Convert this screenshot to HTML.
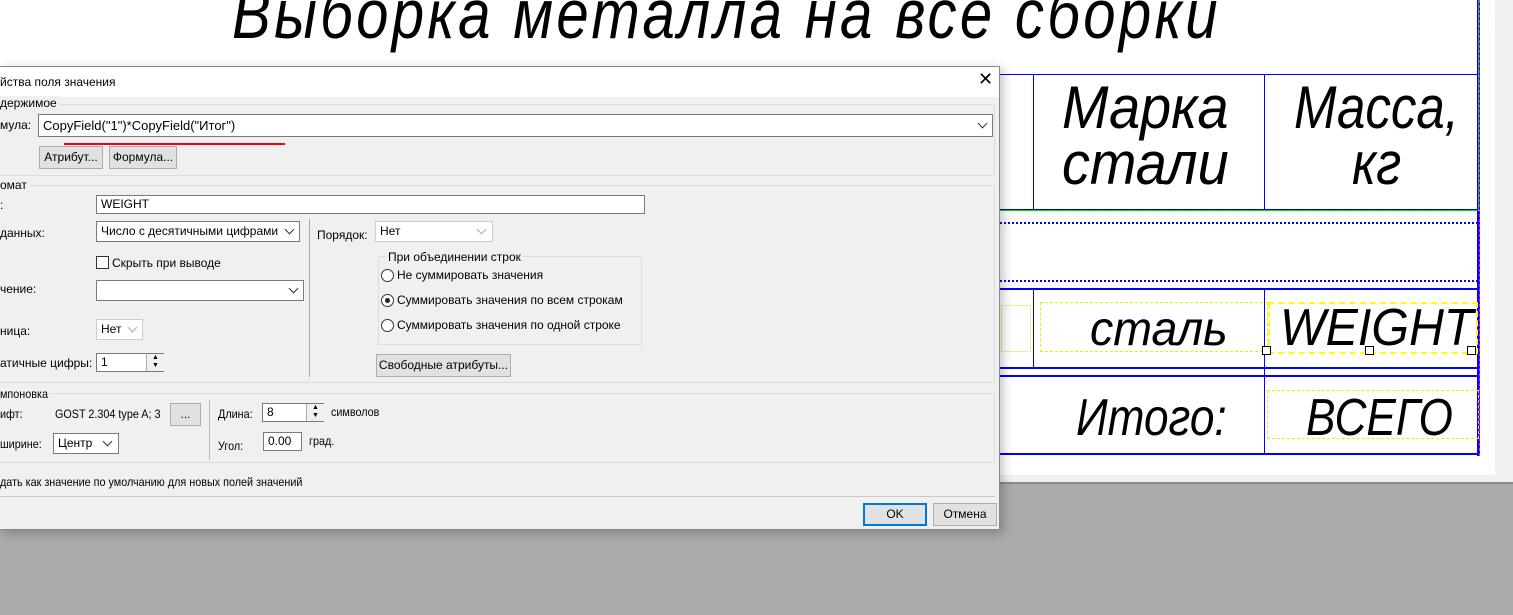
<!DOCTYPE html>
<html><head><meta charset="utf-8"><style>
body{margin:0;width:1513px;height:615px;overflow:hidden;background:#ababab;position:relative;font-family:"Segoe UI","Liberation Sans","DejaVu Sans",sans-serif;font-size:12px;color:#000}
.a{position:absolute}
.cad{font-family:"Liberation Sans",sans-serif;font-style:italic;font-weight:normal;color:#000;white-space:nowrap;transform:scaleX(0.85);transform-origin:left top}
.bl{background:#0000ff}
.in{background:#fff;border:1px solid #7a7a7a;box-sizing:border-box;padding:2px 4px;font-size:12px}
.btn{background:#e1e1e1;border:1px solid #adadad;box-sizing:border-box;text-align:center;font-size:12px}
.grp{border:1px solid #dcdcdc;box-sizing:border-box}
.t{position:absolute;white-space:nowrap;font-size:12px}
.cv{position:absolute;width:6px;height:6px;border-right:1px solid #333;border-bottom:1px solid #333;transform:rotate(45deg)}
.rad{position:absolute;width:11px;height:11px;border:1px solid #333;border-radius:50%;background:#fff}
</style></head><body>
<div class="a" style="left:0;top:0;width:1495px;height:475px;background:#fff"></div>
<div class="a" style="left:1495px;top:0;width:18px;height:482px;background:#f0f0f0"></div>
<div class="a" style="left:0;top:475px;width:1513px;height:7px;background:#f0f0f0"></div>
<div class="a" style="left:0;top:482px;width:1513px;height:2px;background:#8a8a8a"></div>
<div class="a cad" style="left:232px;top:-26px;font-size:70px;letter-spacing:4px;transform:scaleX(0.83)">Выборка металла на все сборки</div>
<!-- table lines -->
<div class="a bl" style="left:995px;top:74px;width:483px;height:1px"></div>
<div class="a" style="left:1477px;top:0;width:2px;height:456px;background:#0000ff;border-right:1px dashed #f0f"></div>
<div class="a" style="left:1478px;top:0;width:1px;height:210px;background:#00cc00"></div>
<div class="a bl" style="left:1033px;top:74px;width:1px;height:135px"></div>
<div class="a bl" style="left:1264px;top:74px;width:1px;height:135px"></div>
<div class="a bl" style="left:995px;top:209px;width:483px;height:1px"></div>
<div class="a" style="left:995px;top:210px;width:484px;height:1px;background:#00dd00"></div>
<div class="a" style="left:995px;top:222px;width:483px;border-top:2px dotted #0000ff"></div>
<div class="a" style="left:995px;top:280px;width:483px;border-top:2px dotted #0000ff"></div>
<div class="a bl" style="left:995px;top:288px;width:484px;height:2px"></div>
<div class="a bl" style="left:995px;top:367px;width:484px;height:2px"></div>
<div class="a bl" style="left:995px;top:375px;width:484px;height:2px"></div>
<div class="a bl" style="left:995px;top:453px;width:484px;height:2px"></div>
<div class="a bl" style="left:1033px;top:290px;width:1px;height:77px"></div>
<div class="a bl" style="left:1264px;top:290px;width:1px;height:163px"></div>
<div class="a" style="left:1040px;top:302px;width:226px;height:48px;border:1px dashed #ee0"></div>
<div class="a" style="left:1268px;top:302px;width:206px;height:48px;border:2px dashed #ff0"></div>
<div class="a" style="left:1267px;top:390px;width:210px;height:47px;border:1px dashed #ee0"></div>
<div class="a" style="left:1001px;top:305px;width:28px;height:45px;border:1px solid #ee8"></div>
<div class="a cad" style="left:1062px;top:80px;font-size:60px;line-height:56px;transform:scaleX(0.93)">Марка<br>стали</div>
<div class="a cad" style="left:1294px;top:80px;font-size:60px;line-height:56px">Масса,</div>
<div class="a cad" style="left:1352px;top:136px;font-size:60px;line-height:56px">кг</div>
<div class="a cad" style="left:1090px;top:302px;font-size:48px;transform:scaleX(0.97)">сталь</div>
<div class="a cad" style="left:1280px;top:298px;font-size:52px;transform:scaleX(0.93)">WEIGHT</div>
<div class="a cad" style="left:1076px;top:388px;font-size:52px">Итого:</div>
<div class="a cad" style="left:1306px;top:388px;font-size:52px">ВСЕГО</div>
<div class="a" style="left:1262px;top:346px;width:7px;height:7px;border:1px solid #000;background:#fff"></div>
<div class="a" style="left:1365px;top:346px;width:7px;height:7px;border:1px solid #000;background:#fff"></div>
<div class="a" style="left:1467px;top:346px;width:7px;height:7px;border:1px solid #000;background:#fff"></div>

<!-- dialog -->
<div class="a" style="left:-1px;top:66px;width:1001px;height:464px;background:#f0f0f0;border:1px solid #888;box-sizing:border-box;box-shadow:3px 3px 10px rgba(0,0,0,.25)"></div>
<div class="a" style="left:0;top:67px;width:999px;height:30px;background:#fff"></div>
<div class="t" style="left:0;top:75px">йства поля значения</div>
<div class="t" style="left:978px;top:69px;font-size:18px">✕</div>

<div class="grp a" style="left:-2px;top:104px;width:997px;height:72px"></div>
<div class="t" style="left:0;top:96px;background:#f0f0f0;padding-right:3px">держимое</div>
<div class="t" style="left:0;top:118px">мула:</div>
<div class="a in" style="left:38px;top:114px;width:955px;height:23px;font-size:13px;padding-top:3px">CopyField("1")*CopyField("Итог")</div>
<div class="cv" style="left:979px;top:120px"></div>
<div class="a" style="left:64px;top:143px;width:221px;height:2px;background:#f00"></div>
<div class="a btn" style="left:39px;top:146px;width:64px;height:23px;line-height:21px">Атрибут...</div>
<div class="a btn" style="left:109px;top:146px;width:68px;height:23px;line-height:21px">Формула...</div>

<div class="grp a" style="left:-2px;top:185px;width:997px;height:198px"></div>
<div class="t" style="left:0;top:178px;background:#f0f0f0;padding-right:3px">омат</div>
<div class="t" style="left:0;top:198px">:</div>
<div class="a in" style="left:96px;top:195px;width:549px;height:19px;padding-top:1px">WEIGHT</div>
<div class="t" style="left:0;top:226px">данных:</div>
<div class="a in" style="left:96px;top:221px;width:204px;height:21px">Число с десятичными цифрами</div>
<div class="cv" style="left:286px;top:226px"></div>
<div class="a" style="left:96px;top:256px;width:11px;height:11px;border:1px solid #333;background:#fff"></div>
<div class="t" style="left:112px;top:256px">Скрыть при выводе</div>
<div class="t" style="left:0;top:282px">чение:</div>
<div class="a in" style="left:96px;top:280px;width:208px;height:21px"></div>
<div class="cv" style="left:290px;top:285px"></div>
<div class="t" style="left:0;top:324px">ница:</div>
<div class="a in" style="left:96px;top:319px;width:47px;height:21px;border-color:#ccc">Нет</div>
<div class="cv" style="left:129px;top:324px;border-color:#aaa"></div>
<div class="t" style="left:0;top:356px">атичные цифры:</div>
<div class="a in" style="left:96px;top:353px;width:68px;height:19px;padding-top:1px">1</div>
<div class="a" style="left:146px;top:354px;width:17px;height:17px;border-left:1px solid #aaa;font-size:7px;line-height:8px;text-align:center;background:#f0f0f0">▲<br>▼</div>
<div class="a" style="left:309px;top:219px;width:1px;height:158px;background:#aaa"></div>
<div class="t" style="left:317px;top:228px">Порядок:</div>
<div class="a in" style="left:375px;top:221px;width:118px;height:21px;border-color:#ccc">Нет</div>
<div class="cv" style="left:478px;top:226px;border-color:#aaa"></div>
<div class="grp a" style="left:378px;top:256px;width:264px;height:89px"></div>
<div class="t" style="left:386px;top:250px;background:#f0f0f0;padding:0 2px">При объединении строк</div>
<div class="rad" style="left:381px;top:269px"></div>
<div class="t" style="left:397px;top:268px">Не суммировать значения</div>
<div class="rad" style="left:381px;top:294px"></div>
<div class="a" style="left:385px;top:298px;width:5px;height:5px;border-radius:50%;background:#222"></div>
<div class="t" style="left:397px;top:293px">Суммировать значения по всем строкам</div>
<div class="rad" style="left:381px;top:319px"></div>
<div class="t" style="left:397px;top:318px">Суммировать значения по одной строке</div>
<div class="a btn" style="left:376px;top:354px;width:135px;height:23px;line-height:21px">Свободные атрибуты...</div>

<div class="grp a" style="left:-2px;top:393px;width:997px;height:70px"></div>
<div class="t" style="left:0;top:387px;background:#f0f0f0;padding-right:3px;transform:scaleX(.9);transform-origin:left">мпоновка</div>
<div class="t" style="left:0;top:407px;transform:scaleX(.9);transform-origin:left">ифт:</div>
<div class="t" style="left:55px;top:407px;transform:scaleX(.9);transform-origin:left">GOST 2.304 type A; 3</div>
<div class="a btn" style="left:170px;top:403px;width:31px;height:23px;line-height:21px">...</div>
<div class="t" style="left:0;top:437px;transform:scaleX(.9);transform-origin:left">ширине:</div>
<div class="a in" style="left:53px;top:433px;width:66px;height:21px;padding-top:2px">Центр</div>
<div class="cv" style="left:104px;top:438px"></div>
<div class="a" style="left:209px;top:400px;width:1px;height:60px;background:#bbb"></div>
<div class="t" style="left:218px;top:407px;transform:scaleX(.9);transform-origin:left">Длина:</div>
<div class="a in" style="left:262px;top:403px;width:62px;height:19px;padding-top:1px">8</div>
<div class="a" style="left:306px;top:404px;width:17px;height:17px;border-left:1px solid #aaa;font-size:7px;line-height:8px;text-align:center;background:#f0f0f0">▲<br>▼</div>
<div class="t" style="left:331px;top:405px;transform:scaleX(.9);transform-origin:left">символов</div>
<div class="t" style="left:218px;top:439px;transform:scaleX(.9);transform-origin:left">Угол:</div>
<div class="a in" style="left:263px;top:432px;width:39px;height:19px;padding-top:1px">0.00</div>
<div class="t" style="left:309px;top:434px;transform:scaleX(.9);transform-origin:left">град.</div>
<div class="t" style="left:0;top:475px;transform:scaleX(.9);transform-origin:left">дать как значение по умолчанию для новых полей значений</div>
<div class="a" style="left:0;top:496px;width:995px;height:1px;background:#c8c8c8"></div>
<div class="a btn" style="left:863px;top:503px;width:64px;height:23px;line-height:19px;border:2px solid #0078d7">OK</div>
<div class="a btn" style="left:933px;top:503px;width:64px;height:23px;line-height:21px">Отмена</div>
</body></html>
